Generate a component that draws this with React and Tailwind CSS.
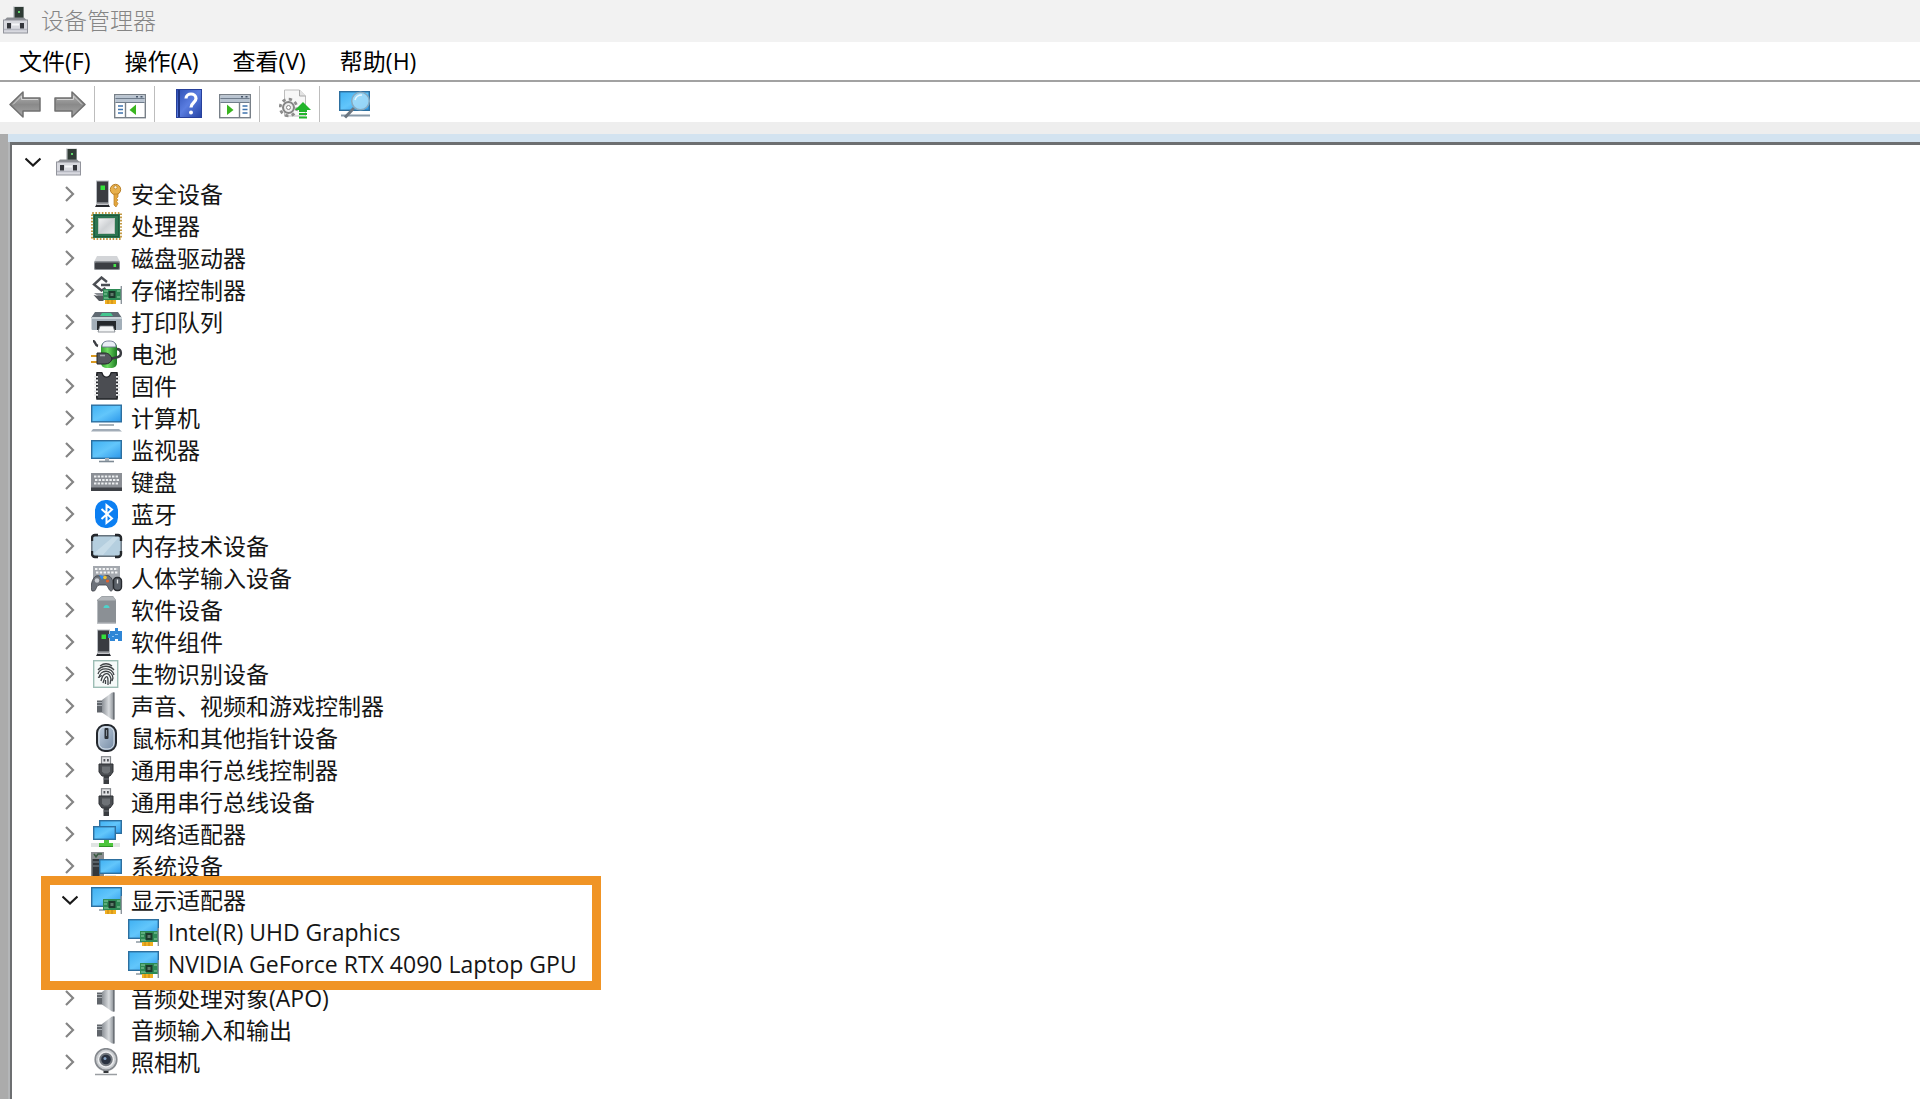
import React, { useState } from 'react';
import { clsx } from 'clsx';

// Gradients shared by all the icons below
const Gradients = () => (
  <svg className="absolute h-0 w-0" aria-hidden="true">
    <defs>
      <linearGradient id="screen" x1="0" y1="0" x2="1" y2="1">
        <stop offset="0" stopColor="#3fb0f2" />
        <stop offset="0.5" stopColor="#62c6fb" />
        <stop offset="1" stopColor="#2b97ea" />
      </linearGradient>
      <linearGradient id="silver" x1="0" y1="0" x2="1" y2="1">
        <stop offset="0" stopColor="#f2f3f4" />
        <stop offset="0.5" stopColor="#cfd2d5" />
        <stop offset="1" stopColor="#e8eaeb" />
      </linearGradient>
      <linearGradient id="cone" x1="0" y1="0" x2="1" y2="0">
        <stop offset="0" stopColor="#8b9096" />
        <stop offset="0.55" stopColor="#d9dcdf" />
        <stop offset="1" stopColor="#7f858b" />
      </linearGradient>
      <linearGradient id="arrow" x1="0" y1="0" x2="0" y2="1">
        <stop offset="0" stopColor="#b9b9b9" />
        <stop offset="0.5" stopColor="#8a8a8a" />
        <stop offset="1" stopColor="#a8a8a8" />
      </linearGradient>
      <linearGradient id="help" x1="0" y1="0" x2="1" y2="1">
        <stop offset="0" stopColor="#2d4fb4" />
        <stop offset="0.5" stopColor="#5a7de0" />
        <stop offset="1" stopColor="#2442a4" />
      </linearGradient>
      <linearGradient id="cell" x1="0" y1="0" x2="1" y2="0">
        <stop offset="0" stopColor="#2f9e2f" />
        <stop offset="0.4" stopColor="#6fdc62" />
        <stop offset="1" stopColor="#1c7a22" />
      </linearGradient>
      <linearGradient id="mouse" x1="0" y1="0" x2="1" y2="1">
        <stop offset="0" stopColor="#c9d6e4" />
        <stop offset="1" stopColor="#6f86a0" />
      </linearGradient>
    </defs>
  </svg>
);

const Icon = ({ children }) => (
  <svg viewBox="0 0 32 28" className="h-7 w-8 shrink-0" aria-hidden="true">{children}</svg>
);

const Screen = ({ x = 0, y = 0, w = 31, h = 19 }) => (
  <rect x={x + 0.7} y={y + 0.7} width={w - 1.4} height={h - 1.4} fill="url(#screen)" stroke="#2d6f9f" strokeWidth="1.4" />
);

const Card = () => (
  <g>
    <path d="M14 24h11v4H14z" fill="#f0b022" />
    <path d="M17 24v4M21 24v4" stroke="#b97c10" strokeWidth="0.8" />
    <rect x="12" y="13" width="18" height="11" fill="#2e8a55" />
    <path d="M13 15h4M13 18h3M26 15h3M26 21h3M13 22h5" stroke="#8fd0a5" strokeWidth="1" />
    <rect x="17.5" y="15" width="7" height="7" fill="#1d3a2c" />
    <rect x="19.5" y="17" width="3" height="3" fill="#5d7a6b" />
    <path d="M30.3 10v18" stroke="#8c949b" strokeWidth="1.4" />
  </g>
);

const Tower = () => (
  <g>
    <rect x="5" y="0.5" width="13" height="23" fill="#b9bdc2" />
    <rect x="6" y="1.5" width="11" height="21" fill="#3a3c41" />
    <path d="M6 23.5h11l2 3.5H4z" fill="#23252a" />
    <path d="M5.5 24.3h12" stroke="#d8dadd" strokeWidth="1.2" />
    <rect x="9.5" y="5.5" width="4.5" height="4.5" fill="#35e23a" />
  </g>
);

const RootIcon = () => (
  <Icon>
    <path d="M12 0.5h11v13H12z" fill="#c4c7ca" />
    <path d="M13.5 1h9v12h-9z" fill="#2f3b35" />
    <path d="M17 5h2v2h-2z" fill="#5fd46a" />
    <path d="M6 11.5h17l3 3H3z" fill="#8a8d92" />
    <rect x="2.5" y="14" width="24" height="13" fill="#d8d9df" stroke="#92949c" />
    <path d="M3 23.5h23" stroke="#b5b7c0" strokeWidth="1.5" />
    <path d="M6 17h4v5.5H6zM19 17h4v5.5h-4z" fill="#34363c" />
    <path d="M11 18.5h7" stroke="#f6f6f9" strokeWidth="2" />
  </Icon>
);

const SecurityIcon = () => (
  <Icon>
    <Tower />
    <circle cx="24.5" cy="9.5" r="5.2" fill="#e8b04b" stroke="#b98028" />
    <circle cx="24.5" cy="7.3" r="1.6" fill="#fff6df" stroke="#a87322" strokeWidth="0.7" />
    <path d="M23 14h4v3l-1.4 1.4L27 20l-1.4 1.6L27 23.5l-2 3.5-2-2z" fill="#e3a63c" stroke="#b98028" strokeWidth="0.7" />
  </Icon>
);

const ProcessorIcon = () => (
  <Icon>
    <rect x="1.2" y="1.2" width="28.6" height="25.6" fill="none" stroke="#c39a45" strokeWidth="2.4" strokeDasharray="1.6 1.6" />
    <rect x="2" y="2" width="27" height="24" fill="#2c7551" />
    <rect x="3.5" y="3.5" width="24" height="21" fill="none" stroke="#1f5b3d" />
    <rect x="7.5" y="6.5" width="16" height="15" fill="url(#silver)" stroke="#b9c4bd" />
  </Icon>
);

const DiskIcon = () => (
  <Icon>
    <path d="M6 12h20l3 6H3z" fill="#d3d5d8" />
    <rect x="3" y="17" width="26" height="9" rx="1.5" fill="#8d9196" />
    <rect x="4" y="18.5" width="24" height="6.5" rx="1" fill="#3b3e43" />
    <path d="M22.5 20h2.6v3h-2.6z" fill="#45e54a" />
  </Icon>
);

const StorageIcon = () => (
  <Icon>
    <path d="M16 6l-5.5-4.500L3 8.500l7.500 6 4-2.500M10 9h9" fill="none" stroke="#4b4e53" strokeWidth="2.4" />
    <path d="M3 17h9v3H7z" fill="#8a8e93" />
    <path d="M2.500 19l5 1h5v5H8z" fill="#55595e" />
    <Card />
  </Icon>
);

const PrinterIcon = () => (
  <Icon>
    <path d="M4 4h23l4 6H0z" fill="#5f6a72" />
    <path d="M11 5h9l2 3H9z" fill="#43c68f" />
    <rect x="0.5" y="9" width="30.5" height="13" rx="1" fill="#a3afb9" />
    <path d="M0.5 10h30.5" stroke="#d9e0e5" strokeWidth="1.5" />
    <path d="M6 13h19v9H6z" fill="#24282c" />
    <path d="M9 18h13l2 6H7z" fill="#f3f5f6" stroke="#787f85" strokeWidth="0.8" />
  </Icon>
);

const BatteryIcon = () => (
  <Icon>
    <rect x="10" y="2" width="16" height="26" rx="5" fill="url(#cell)" />
    <path d="M11 7c0-5 3-6 7-6s7 1 7 6z" fill="#e9eef5" stroke="#6b7590" strokeWidth="0.9" />
    <path d="M2 1c3 0 1 4 5 5M26 9c5 0 5 7 1 8l-8 2" fill="none" stroke="#3a3d42" strokeWidth="2.4" />
    <path d="M0 16h6M0 22h6" stroke="#d99a24" strokeWidth="2.2" />
    <path d="M6 13h8c4 0 6 3 7 6-1 3-3 5-7 5H6z" fill="#55585e" stroke="#24262a" />
    <path d="M9 15.5h5" stroke="#a5a9af" strokeWidth="1.6" />
  </Icon>
);

const FirmwareIcon = () => (
  <Icon>
    <path d="M5 1.5h22v25H5z" fill="#2b2d31" />
    <path d="M6 0.5h5c1 6 8 6 9 0h6v26.500H6z" fill="#4b4d52" stroke="#222428" strokeWidth="1.4" />
    <path d="M11.500 0h8c-1 6-7 6-8 0z" fill="#fff" />
    <path d="M5 4v21M27 4v21" stroke="#e9eaeb" strokeWidth="4" strokeDasharray="1.800 1.800" />
  </Icon>
);

const ComputerIcon = () => (
  <Icon>
    <Screen y={0.5} h={18} />
    <path d="M8 21h15" stroke="#8d98a2" strokeWidth="1.5" />
    <path d="M2 25h26l3 2.5H0z" fill="#a3adb8" />
  </Icon>
);

const MonitorIcon = () => (
  <Icon>
    <Screen y={4} h={19} />
    <path d="M14 22h4v3h-4z" fill="#a9b2ba" />
    <path d="M8 25.5h15" stroke="#7e8a95" strokeWidth="1.6" />
  </Icon>
);

const KeyboardIcon = () => (
  <Icon>
    <rect x="0" y="5" width="31" height="18" fill="#8b8f95" />
    <rect x="0" y="19.5" width="31" height="3.5" fill="#3e4146" />
    <path d="M3 8.5h25M4 12h24M3 15.5h25" stroke="#eceef0" strokeWidth="2.2" strokeDasharray="2.4 1.2" />
  </Icon>
);

const BluetoothIcon = () => (
  <Icon>
    <rect x="4" y="0" width="23" height="28" rx="10.5" fill="#0c7ff2" />
    <path d="M10.5 9l10.5 9.5-5.5 4.5V5l5.5 4.5L10.5 19" fill="none" stroke="#fff" strokeWidth="2" />
  </Icon>
);

const MemoryIcon = () => (
  <Icon>
    <rect x="0.8" y="3.8" width="29.4" height="20.4" rx="3" fill="#b5cfdf" stroke="#66737d" strokeWidth="1.4" />
    <path d="M2 22L22 5h6L12 23z" fill="#d3e4ee" opacity="0.6" />
    <path d="M1 9V6a3 3 0 0 1 3-3h3M30 9V6a3 3 0 0 0-3-3h-3M1 19v3a3 3 0 0 0 3 3h3M30 19v3a3 3 0 0 1-3 3h-3" fill="none" stroke="#25282c" strokeWidth="2.4" />
  </Icon>
);

const HidIcon = () => (
  <Icon>
    <rect x="2" y="2" width="27" height="15" fill="#a4a8ae" />
    <path d="M4 5h23M5 8.5h22" stroke="#f3f4f5" strokeWidth="2" strokeDasharray="2.4 1.4" />
    <path d="M1 27c-2-4 0-13 4-15 3-1 6 1 9 0 4-2 7 2 8 6 1 5 0 9-2 9s-3-5-5-6H8c-3 1-3 6-5 6z" fill="#6d727a" stroke="#3b3e44" strokeWidth="0.8" />
    <circle cx="6" cy="16.5" r="2.3" fill="#c9ccd1" />
    <path d="M8 11l5 1-2 4z" fill="#2d8cf0" />
    <circle cx="14" cy="13.5" r="1.8" fill="#f2c230" />
    <circle cx="16.5" cy="17" r="1.6" fill="#e3622f" />
    <rect x="22.5" y="13.5" width="8" height="13" rx="3.5" fill="#5b6169" stroke="#26292e" strokeWidth="1.4" />
    <path d="M26.5 15.5v4" stroke="#e4e6e8" strokeWidth="1.3" />
  </Icon>
);

const SoftwareDeviceIcon = () => (
  <Icon>
    <path d="M6 4l5-4h11l3 4v23.5H6z" fill="#8b9095" />
    <path d="M6 4.5h19L22 0.5H11z" fill="#b3b7bb" />
    <path d="M6.5 5v22h18" fill="none" stroke="#b8bcc0" />
    <path d="M12.5 12c0-4 6-4 6 0z" fill="#4fd3cb" />
  </Icon>
);

const SoftwareComponentIcon = () => (
  <Icon>
    <g transform="translate(1 1)"><Tower /></g>
    <path d="M19 3h5V0h3v3h4v10h-4v-2h-3v2h-5v-3h-2V6h2z" fill="#2f86d6" />
    <path d="M24 6.500h3M21 8.500h2" stroke="#8cc4f2" strokeWidth="1.200" />
  </Icon>
);

const FingerprintIcon = () => (
  <Icon>
    <rect x="2.7" y="0.7" width="24" height="26.6" fill="#f6faf9" stroke="#9dbdb5" strokeWidth="1.4" />
    <path d="M9 6c4-3 8-3 12 0M7 10c4-5 12-5 16 0M7 14c2-7 14-7 16 1M8 18c1-9 13-9 14 0l-1 3M10 21c2-9 8-10 10-2l-1 5M12 23c2-7 5-9 5-2v4M14.5 24v-4M7 17.5l4-2" fill="none" stroke="#3f4346" strokeWidth="1.3" />
  </Icon>
);

const SpeakerIcon = () => (
  <Icon>
    <path d="M6 8.5h6v12H6z" fill="#60656b" />
    <path d="M6 10.5h5M6 13.5h5" stroke="#a7acb1" />
    <path d="M11 8L21 0.5h2.5v27H21L11 20.5z" fill="url(#cone)" />
    <path d="M22.7 0.5v27" stroke="#6c7177" strokeWidth="1.4" />
  </Icon>
);

const MouseIcon = () => (
  <Icon>
    <rect x="6" y="1" width="19" height="26" rx="8" fill="url(#mouse)" stroke="#23272c" strokeWidth="2" />
    <rect x="8" y="3" width="15" height="22" rx="6" fill="none" stroke="#e0e8ef" strokeWidth="0.9" />
    <rect x="13.5" y="4" width="4" height="11" rx="1" fill="#2b3036" />
    <path d="M15.5 6v6" stroke="#87919b" />
  </Icon>
);

const UsbIcon = () => (
  <Icon>
    <rect x="10.5" y="0.7" width="9" height="8" fill="#e4e5e7" stroke="#85888c" strokeWidth="1.2" />
    <path d="M12.5 3h1.800v2.400h-1.800zM16 3h1.800v2.400H16z" fill="#515459" />
    <path d="M8 8h14v8l-3 4h-8l-3-4z" fill="#4b4e52" stroke="#2f3135" />
    <path d="M11 10.5h8v5l-2 2h-4l-2-2z" fill="#6e7276" />
    <path d="M12.5 20h5.500v8h-5.500z" fill="#3a3d41" />
    <path d="M12.5 23h5.500" stroke="#777b80" />
  </Icon>
);

const NetworkIcon = () => (
  <Icon>
    <Screen x={8} y={0} w={23} h={14} />
    <Screen x={2} y={6} w={23} h={14} />
    <path d="M0 23h29v4H0z" fill="#dfe4e2" />
    <path d="M13 20h5v3h4v4H8v-4h5z" fill="#4cc63c" />
    <path d="M8 26.5h14" stroke="#2f9327" />
  </Icon>
);

const SystemIcon = () => (
  <Icon>
    <rect x="0" y="0" width="13" height="27" fill="#898d90" />
    <rect x="1.5" y="7" width="7" height="18" fill="#33373b" />
    <path d="M3 2l2 3 2-3h4" fill="none" stroke="#3b5c43" strokeWidth="1.5" />
    <path d="M2 10h6M2 14h6" stroke="#7f8b93" />
    <Screen x={8} y={7} w={23} h={15} />
    <path d="M14 24.5h11" stroke="#7e8a95" strokeWidth="1.5" />
  </Icon>
);

const DisplayIcon = () => (
  <Icon>
    <Screen y={1} h={20} />
    <path d="M8 24h6" stroke="#8d98a2" strokeWidth="1.5" />
    <Card />
  </Icon>
);

const CameraIcon = () => (
  <Icon>
    <path d="M12.500 19h5v6h-5z" fill="#33363a" />
    <path d="M4 26.500h22" stroke="#9a9ea2" strokeWidth="1.500" />
    <circle cx="15" cy="11.5" r="10.8" fill="#c9cccf" stroke="#85898e" strokeWidth="1.6" />
    <circle cx="15" cy="11.5" r="7.5" fill="#73787e" stroke="#ecedef" strokeWidth="1.5" />
    <circle cx="15" cy="11.5" r="4.8" fill="#2a3240" />
    <circle cx="14" cy="10.5" r="1.5" fill="#88a6c6" />
  </Icon>
);

const ToolSvg = ({ children }) => (
  <svg viewBox="0 0 32 30" className="h-[30px] w-8" aria-hidden="true">{children}</svg>
);

const ArrowShape = () => (
  <g>
    <path d="M1 15.5L14 3v6h17v13H14v6z" fill="url(#arrow)" stroke="#707070" strokeWidth="1.5" strokeLinejoin="round" />
    <path d="M4 15.5L12.5 7v3.5h16.500" fill="none" stroke="#d2d2d2" />
  </g>
);

const PaneFrame = () => (
  <g>
    <rect x="0.7" y="5.7" width="30.6" height="23" fill="#fff" stroke="#788088" strokeWidth="1.4" />
    <path d="M1.4 6.4h29.200v6.600H1.400z" fill="#b9c4d1" />
    <path d="M1.4 9.5h29.200M1.400 13.500h29.200" stroke="#6f7c8b" />
    <path d="M22 7.8h2M26.500 7.800h2" stroke="#475569" strokeWidth="1.6" />
  </g>
);

const PaneLeft = () => (
  <ToolSvg>
    <PaneFrame />
    <path d="M11.5 13.5v15" stroke="#788088" strokeWidth="1.4" />
    <path d="M4 17h5M4 20.5h5M4 24h5" stroke="#3f73ad" strokeWidth="1.5" />
    <path d="M22 15.5v10.5L15.5 21z" fill="#39b51f" />
  </ToolSvg>
);

const PaneRight = () => (
  <ToolSvg>
    <PaneFrame />
    <path d="M20.5 13.5v15" stroke="#788088" strokeWidth="1.4" />
    <path d="M23.5 17h5M23.500 20.500h5M23.500 24h5" stroke="#3f73ad" strokeWidth="1.5" />
    <path d="M8 15.5v10.5l6.500-5z" fill="#39b51f" />
  </ToolSvg>
);

const HelpBook = () => (
  <ToolSvg>
    <rect x="2.500" y="0.500" width="25" height="28" fill="url(#help)" stroke="#27409b" />
    <path d="M5 1v27" stroke="#1f3688" strokeWidth="2" />
    <path d="M12 9.5c0-6 10-6 10 0 0 4-5 4-5 9" fill="none" stroke="#fff" strokeWidth="3.2" />
    <circle cx="17" cy="23.5" r="2" fill="#fff" />
  </ToolSvg>
);

const UpdateDriver = () => (
  <ToolSvg>
    <path d="M5.5 1h15l6 6v20h-21z" fill="#f7f7f7" stroke="#bdbdbd" />
    <path d="M20.5 1v6h6" fill="#e3e3e3" stroke="#a8a8a8" />
    <circle cx="9.5" cy="18.5" r="8.3" fill="none" stroke="#8d8d8d" strokeWidth="2.8" strokeDasharray="3.3 3.22" />
    <circle cx="9.5" cy="18.5" r="5.5" fill="#ededed" stroke="#858585" strokeWidth="2" />
    <circle cx="9.5" cy="18.5" r="2" fill="#fff" stroke="#858585" />
    <path d="M24 13l8 8h-4v2h-8v-2h-4z" fill="#22b52b" />
    <path d="M20 25h8M20 28.5h8" stroke="#22b52b" strokeWidth="2" />
  </ToolSvg>
);

const ScanHardware = () => (
  <ToolSvg>
    <Screen y={2} h={20} />
    <path d="M2 26.5h29" stroke="#8799a8" strokeWidth="2" />
    <path d="M15 19l-9 9.5" stroke="#6c7680" strokeWidth="3" />
    <circle cx="21.5" cy="12" r="8.8" fill="#a5dcf8" fillOpacity="0.85" stroke="#86a9bf" strokeWidth="1.5" />
    <path d="M16 11c1-4 4-5 7-5" fill="none" stroke="#e4f6ff" strokeWidth="1.5" />
  </ToolSvg>
);

const menus = ['文件(F)', '操作(A)', '查看(V)', '帮助(H)'];

const toolGroups = [
  [
    { label: '后退', icon: <ToolSvg><ArrowShape /></ToolSvg> },
    { label: '前进', icon: <ToolSvg><g transform="translate(32 0) scale(-1 1)"><ArrowShape /></g></ToolSvg> },
  ],
  [{ label: '显示/隐藏控制台树', icon: <PaneLeft /> }],
  [
    { label: '帮助', icon: <HelpBook /> },
    { label: '显示/隐藏操作窗格', icon: <PaneRight /> },
  ],
  [{ label: '更新驱动程序', icon: <UpdateDriver /> }],
  [{ label: '扫描检测硬件改动', icon: <ScanHardware /> }],
];

const categories = [
  { name: '安全设备', icon: <SecurityIcon /> },
  { name: '处理器', icon: <ProcessorIcon /> },
  { name: '磁盘驱动器', icon: <DiskIcon /> },
  { name: '存储控制器', icon: <StorageIcon /> },
  { name: '打印队列', icon: <PrinterIcon /> },
  { name: '电池', icon: <BatteryIcon /> },
  { name: '固件', icon: <FirmwareIcon /> },
  { name: '计算机', icon: <ComputerIcon /> },
  { name: '监视器', icon: <MonitorIcon /> },
  { name: '键盘', icon: <KeyboardIcon /> },
  { name: '蓝牙', icon: <BluetoothIcon /> },
  { name: '内存技术设备', icon: <MemoryIcon /> },
  { name: '人体学输入设备', icon: <HidIcon /> },
  { name: '软件设备', icon: <SoftwareDeviceIcon /> },
  { name: '软件组件', icon: <SoftwareComponentIcon /> },
  { name: '生物识别设备', icon: <FingerprintIcon /> },
  { name: '声音、视频和游戏控制器', icon: <SpeakerIcon /> },
  { name: '鼠标和其他指针设备', icon: <MouseIcon /> },
  { name: '通用串行总线控制器', icon: <UsbIcon /> },
  { name: '通用串行总线设备', icon: <UsbIcon /> },
  { name: '网络适配器', icon: <NetworkIcon /> },
  { name: '系统设备', icon: <SystemIcon /> },
  {
    name: '显示适配器',
    icon: <DisplayIcon />,
    highlighted: true,
    devices: ['Intel(R) UHD Graphics', 'NVIDIA GeForce RTX 4090 Laptop GPU'],
  },
  { name: '音频处理对象(APO)', icon: <SpeakerIcon /> },
  { name: '音频输入和输出', icon: <SpeakerIcon /> },
  { name: '照相机', icon: <CameraIcon /> },
];

const Toggle = ({ open, label, onClick }) => (
  <button type="button" aria-expanded={open} aria-label={label} onClick={onClick} className="mr-[13px] h-4 w-4 shrink-0">
    <svg viewBox="0 0 16 16" className="h-4 w-4" fill="none" strokeWidth="2.2">
      {open
        ? <path d="M0.5 4.5L8 11.5l7.500-7" stroke="#1a1a1a" />
        : <path d="M4 1l7 7-7 7" stroke="#858585" />}
    </svg>
  </button>
);

const Category = ({ item }) => {
  const [open, setOpen] = useState(Boolean(item.devices));

  return (
    <li className={clsx('w-fit', item.highlighted && 'relative z-10 py-0.5')}>
      <div className="flex h-8 items-center">
        <Toggle open={open} label={item.name} onClick={() => setOpen(!open)} />
        {item.icon}
        <span className="ml-2 whitespace-nowrap">{item.name}</span>
      </div>
      {open && item.devices && (
        <ul className="pl-[66px]">
          {item.devices.map((device) => (
            <li key={device} className="flex h-8 items-center">
              <DisplayIcon />
              <span className="ml-2 whitespace-nowrap">{device}</span>
            </li>
          ))}
        </ul>
      )}
      {item.highlighted && (
        <div className="pointer-events-none absolute -top-1.5 -right-6 -bottom-2 -left-[21px] border-[9px] border-[#f09425]" />
      )}
    </li>
  );
};

const App = () => {
  const [rootOpen, setRootOpen] = useState(true);

  return (
    <div className="flex min-h-screen flex-col bg-white pb-2 font-['Open_Sans','Noto_Sans_CJK_SC',sans-serif] text-[23px] leading-8 text-[#151515]">
      <Gradients />

      <header className="flex h-[42px] items-center gap-2 bg-[#f2f2f2] pb-0.5 pl-px">
        <RootIcon />
        <h1 className="font-light text-[#858585]">设备管理器</h1>
      </header>

      <nav className="flex h-10 items-center gap-[34px] border-b-2 border-[#a2a2a2] px-[19px]">
        {menus.map((menu) => (
          <button key={menu} type="button" className="text-black">{menu}</button>
        ))}
      </nav>

      <div className="flex h-10 items-stretch pt-1" role="toolbar">
        {toolGroups.map((group, i) => (
          <div
            key={group[0].label}
            className={clsx(
              'flex items-center gap-[13px] pr-2',
              i === 0 ? 'pl-[9px]' : 'pl-[19px]',
              i < toolGroups.length - 1 && 'border-r border-[#bdbdbd]'
            )}
          >
            {group.map((tool) => (
              <button key={tool.label} type="button" aria-label={tool.label}>{tool.icon}</button>
            ))}
          </div>
        ))}
      </div>

      <div className="h-3 bg-[#eeeeee]" />

      <main className="flex flex-1 bg-[#ababab] pl-2">
        <div className="flex flex-1 flex-col">
          <div className="h-2 bg-[#d3e3f0]" />
          <div className="flex flex-1 bg-[#b4b6b8] pl-0.5">
            <div className="flex-1 border-t-[3px] border-l-2 border-[#6d6f71] bg-white pt-px pl-[13px]">
              <div className="flex h-8 items-center">
                <Toggle open={rootOpen} label="计算机" onClick={() => setRootOpen(!rootOpen)} />
                <RootIcon />
              </div>
              {rootOpen && (
                <ul className="pl-[37px]">
                  {categories.map((item) => (
                    <Category key={item.name} item={item} />
                  ))}
                </ul>
              )}
            </div>
          </div>
        </div>
      </main>
    </div>
  );
};

export default App;
